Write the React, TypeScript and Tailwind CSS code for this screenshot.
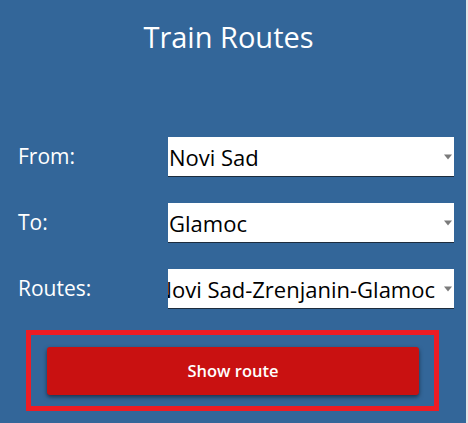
const rows = [
  { label: 'From:', value: 'Novi Sad', clipped: false },
  { label: 'To:', value: 'Glamoc', clipped: false },
  { label: 'Routes:', value: 'Novi Sad-Zrenjanin-Glamoc', clipped: true },
];

const Arrow = () => (
  <div className="absolute right-[2px] top-1/2 -translate-y-1/2 w-0 h-0 border-l-[4px] border-r-[4px] border-t-[5px] border-l-transparent border-r-transparent border-t-[#7b7b7b]"></div>
);

export default function App() {
  return (
    <div
      className="flex w-[468px] h-[423px] overflow-hidden"
      style={{ fontFamily: '"Open Sans", "Noto Sans", sans-serif' }}
    >
      <div className="w-[466px] h-full bg-[#336699] flex flex-col">
        {/* Title */}
        <h1 className="pt-[19px] pr-[9px] text-center text-white text-[29px] leading-[36px]">
          Train Routes
        </h1>

        {/* Form rows */}
        <div className="mt-[82px] flex flex-col gap-[26px]">
          {rows.map((row) => (
            <div key={row.label} className="flex items-center h-[40px]">
              <div className="w-[168px] pl-[18px] text-white text-[21px]">{row.label}</div>
              <div
                className={`relative w-[286px] h-[40px] bg-white border-b-[1px] border-[#1d2c3d] flex items-center overflow-hidden ${
                  row.clipped ? 'justify-end pr-[19px]' : 'pl-[1px]'
                }`}
              >
                <span className="shrink-0 whitespace-nowrap text-black text-[22px] leading-none">
                  {row.value}
                </span>
                <Arrow />
              </div>
            </div>
          ))}
        </div>

        {/* Button frame */}
        <div className="mt-[21px] ml-[26px] w-[413px] h-[81px] border-[5px] border-[#ed1c24] pl-[16px] pt-[12px]">
          <button className="w-[372px] h-[48px] bg-[#c91111] rounded-[3px] text-white text-[16.5px] font-semibold shadow-[0_2px_4px_rgba(0,0,0,0.5)]">
            Show route
          </button>
        </div>
      </div>
      <div className="w-[2px] h-full bg-[#e5e5e5]"></div>
    </div>
  );
}
